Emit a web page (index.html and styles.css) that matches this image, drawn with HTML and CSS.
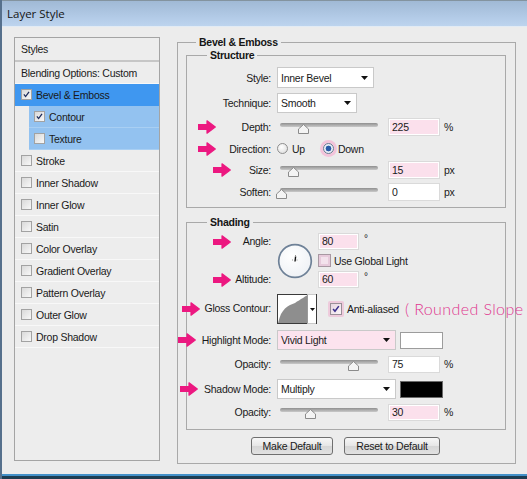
FILE: index.html
```html
<!DOCTYPE html>
<html>
<head>
<meta charset="utf-8">
<title>Layer Style</title>
<link rel="stylesheet" href="styles.css">
</head>
<body>
<div class="window">
  <div class="titlebar"><span class="title">Layer Style</span></div>
  <div class="content">
    <div class="styles-list">
      <div class="list-header">Styles</div>
      <div class="list-row">Blending Options: Custom</div>
      <div class="list-row selected"><span class="cb"><svg viewBox="0 0 11 11"><path d="M2.3 5.4 L4.4 8 L8.6 2.3" class="tick"/></svg></span>Bevel &amp; Emboss</div>
      <div class="list-row sub"><span class="cb"><svg viewBox="0 0 11 11"><path d="M2.3 5.4 L4.4 8 L8.6 2.3" class="tick"/></svg></span>Contour</div>
      <div class="list-row sub"><span class="cb"></span>Texture</div>
      <div class="list-row"><span class="cb"></span>Stroke</div>
      <div class="list-row"><span class="cb"></span>Inner Shadow</div>
      <div class="list-row"><span class="cb"></span>Inner Glow</div>
      <div class="list-row"><span class="cb"></span>Satin</div>
      <div class="list-row"><span class="cb"></span>Color Overlay</div>
      <div class="list-row"><span class="cb"></span>Gradient Overlay</div>
      <div class="list-row"><span class="cb"></span>Pattern Overlay</div>
      <div class="list-row"><span class="cb"></span>Outer Glow</div>
      <div class="list-row"><span class="cb"></span>Drop Shadow</div>
    </div>

    <div class="settings">
      <fieldset class="group outer">
        <legend>Bevel &amp; Emboss</legend>

        <fieldset class="group inner structure">
          <legend>Structure</legend>
          <div class="row r-style">
            <span class="lbl">Style:</span>
            <div class="select w-style"><span>Inner Bevel</span><svg class="caret" viewBox="0 0 7 4"><polygon points="0,0 7,0 3.5,4"/></svg></div>
          </div>
          <div class="row r-tech">
            <span class="lbl">Technique:</span>
            <div class="select w-tech"><span>Smooth</span><svg class="caret" viewBox="0 0 7 4"><polygon points="0,0 7,0 3.5,4"/></svg></div>
          </div>
          <div class="row r-slider r-depth">
            <svg class="arrow a-11" viewBox="0 0 18 14"><polygon points="0.5,4.5 9,4.5 9,0.8 17.3,7 9,13.2 9,9.5 0.5,9.5"/></svg>
            <span class="lbl">Depth:</span>
            <div class="slider"><span class="track"></span><svg class="thumb" style="left:18px" viewBox="0 0 11 10"><polygon points="5.5,0.5 10.5,5 10.5,9.5 0.5,9.5 0.5,5"/></svg></div>
            <span class="num pink">225</span><span class="unit">%</span>
          </div>
          <div class="row r-dir">
            <svg class="arrow a-11" viewBox="0 0 18 14"><polygon points="0.5,4.5 9,4.5 9,0.8 17.3,7 9,13.2 9,9.5 0.5,9.5"/></svg>
            <span class="lbl">Direction:</span>
            <span class="radio"></span><span class="rlabel">Up</span>
            <span class="radio on"></span><span class="rlabel">Down</span>
          </div>
          <div class="row r-slider">
            <svg class="arrow a-26" viewBox="0 0 18 14"><polygon points="0.5,4.5 9,4.5 9,0.8 17.3,7 9,13.2 9,9.5 0.5,9.5"/></svg>
            <span class="lbl">Size:</span>
            <div class="slider"><span class="track"></span><svg class="thumb" style="left:8px" viewBox="0 0 11 10"><polygon points="5.5,0.5 10.5,5 10.5,9.5 0.5,9.5 0.5,5"/></svg></div>
            <span class="num pink">15</span><span class="unit">px</span>
          </div>
          <div class="row r-slider">
            <span class="lbl">Soften:</span>
            <div class="slider"><span class="track"></span><svg class="thumb" style="left:-4px" viewBox="0 0 11 10"><polygon points="5.5,0.5 10.5,5 10.5,9.5 0.5,9.5 0.5,5"/></svg></div>
            <span class="num">0</span><span class="unit">px</span>
          </div>
        </fieldset>

        <fieldset class="group inner shading">
          <legend>Shading</legend>
          <div class="angle-block">
            <div class="angle-labels">
              <span class="lbl stack"><svg class="arrow a-26" viewBox="0 0 18 14"><polygon points="0.5,4.5 9,4.5 9,0.8 17.3,7 9,13.2 9,9.5 0.5,9.5"/></svg>Angle:</span>
              <span class="lbl stack"><svg class="arrow a-26" viewBox="0 0 18 14"><polygon points="0.5,4.5 9,4.5 9,0.8 17.3,7 9,13.2 9,9.5 0.5,9.5"/></svg>Altitude:</span>
            </div>
            <svg class="dial" viewBox="0 0 36 36">
              <defs><radialGradient id="dg" cx="0.4" cy="0.35" r="0.7"><stop offset="0" stop-color="#ffffff"/><stop offset="1" stop-color="#eef1f5"/></radialGradient></defs>
              <circle cx="18" cy="18" r="16.3" fill="url(#dg)" stroke="#6e8197" stroke-width="1.7"/>
              <line x1="18" y1="18.5" x2="18.6" y2="13.5" stroke="#111" stroke-width="1.4"/>
              <line x1="15" y1="17" x2="16.5" y2="17" stroke="#8a8a8a" stroke-width="0.9" stroke-dasharray="1 1"/>
              <line x1="19.5" y1="17" x2="21" y2="17" stroke="#8a8a8a" stroke-width="0.9" stroke-dasharray="1 1"/>
              <line x1="18.5" y1="12" x2="18.5" y2="13" stroke="#8a8a8a" stroke-width="0.9"/>
            </svg>
            <div class="angle-fields">
              <div class="af-row"><span class="num small pink">80</span><span class="deg">°</span></div>
              <div class="af-row"><span class="cb pinkish"></span><span class="cb-text">Use Global Light</span></div>
              <div class="af-row"><span class="num small pink">60</span><span class="deg">°</span></div>
            </div>
          </div>
          <div class="row r-contour">
            <svg class="arrow a-m5" viewBox="0 0 18 14"><polygon points="0.5,4.5 9,4.5 9,0.8 17.3,7 9,13.2 9,9.5 0.5,9.5"/></svg>
            <span class="lbl">Gloss Contour:</span>
            <div class="contour">
              <svg class="curve" viewBox="0 0 29 28"><polygon points="0,28 1.5,23 3,19 5,16 7,13.5 9.5,11.5 12,10 14.5,9 17,8 19,6.5 21,5.5 23,4 25,3 27,1.5 29,0.5 29,28" fill="#8e8e8e"/></svg>
              <span class="contour-drop"><svg class="caret" viewBox="0 0 7 4"><polygon points="0,0 7,0 3.5,4"/></svg></span>
            </div>
            <span class="halo"><span class="cb big"><svg viewBox="0 0 11 11"><path d="M2.3 5.4 L4.4 8 L8.6 2.3" class="tick purple"/></svg></span></span>
            <span class="cb-text">Anti-aliased</span>
            <span class="note">( Rounded Slope</span>
          </div>
          <div class="row r-mode r-hl">
            <svg class="arrow a-m9" viewBox="0 0 18 14"><polygon points="0.5,4.5 9,4.5 9,0.8 17.3,7 9,13.2 9,9.5 0.5,9.5"/></svg>
            <span class="lbl">Highlight Mode:</span>
            <div class="select w-mode pink"><span>Vivid Light</span><svg class="caret" viewBox="0 0 7 4"><polygon points="0,0 7,0 3.5,4"/></svg></div>
            <span class="swatch white"></span>
          </div>
          <div class="row r-op r-op1">
            <span class="lbl">Opacity:</span>
            <div class="slider"><span class="track"></span><svg class="thumb" style="left:68px" viewBox="0 0 11 10"><polygon points="5.5,0.5 10.5,5 10.5,9.5 0.5,9.5 0.5,5"/></svg></div>
            <span class="num">75</span><span class="unit">%</span>
          </div>
          <div class="row r-mode r-sh">
            <svg class="arrow a-m7" viewBox="0 0 18 14"><polygon points="0.5,4.5 9,4.5 9,0.8 17.3,7 9,13.2 9,9.5 0.5,9.5"/></svg>
            <span class="lbl">Shadow Mode:</span>
            <div class="select w-mode"><span>Multiply</span><svg class="caret" viewBox="0 0 7 4"><polygon points="0,0 7,0 3.5,4"/></svg></div>
            <span class="swatch black"></span>
          </div>
          <div class="row r-op r-op2">
            <span class="lbl">Opacity:</span>
            <div class="slider"><span class="track"></span><svg class="thumb" style="left:25px" viewBox="0 0 11 10"><polygon points="5.5,0.5 10.5,5 10.5,9.5 0.5,9.5 0.5,5"/></svg></div>
            <span class="num pink">30</span><span class="unit">%</span>
          </div>
        </fieldset>

        <div class="buttons">
          <button class="btn b-make" type="button">Make Default</button>
          <button class="btn b-reset" type="button">Reset to Default</button>
        </div>
      </fieldset>
    </div>
  </div>
  <div class="frame-bottom"></div>
</div>
</body>
</html>
```
FILE: styles.css
```css
* { box-sizing: border-box; }
html, body { margin: 0; padding: 0; }
body {
  width: 527px;
  height: 479px;
  overflow: hidden;
  background: #ececec;
  font-family: "Liberation Sans", Arial, sans-serif;
  font-size: 10.5px;
  letter-spacing: -0.25px;
  color: #1a1a1a;
}

.window {
  width: 527px;
  height: 479px;
  display: flex;
  flex-direction: column;
  background: #ececec;
  border-left: 2px solid #56708c;
}

/* title bar */
.titlebar {
  flex: none;
  height: 27px;
  display: flex;
  align-items: center;
  padding-left: 5px;
  background: linear-gradient(#a0b9d5, #b4cce8 70%, #bdd4ee);
  border-top: 1px solid #83939f;
  border-bottom: 1px solid #e2ebf4;
}
.title {
  font-family: "Open Sans", "Liberation Sans", sans-serif;
  font-size: 11.5px;
  letter-spacing: 0;
  color: #151515;
}

.content {
  flex: 1;
  display: flex;
  align-items: flex-start;
  padding: 10px 0 0 12px;
}

/* styles list */
.styles-list {
  flex: none;
  width: 146px;
  height: 424px;
  border: 1px solid #a4a4a4;
  background: #ededed;
}
.list-header {
  height: 24px;
  padding-left: 6px;
  display: flex;
  align-items: center;
  border-bottom: 2px solid #c6c6c6;
}
.list-row {
  height: 22px;
  display: flex;
  align-items: center;
  gap: 4px;
  padding-left: 6px;
  border-bottom: 1px solid #f8f8f8;
}
.list-row.selected { background: #3f97f0; border-bottom-color: #3f97f0; }
.list-row.sub {
  margin-left: 14px;
  padding-left: 5px;
  background: #93c2f0;
  border-bottom-color: #a9cff3;
}

.cb {
  flex: none;
  width: 11px;
  height: 11px;
  border: 1px solid #a2a2a2;
  background: linear-gradient(135deg, #d9d9d9, #f8f8f8);
  display: flex;
}
.cb svg { width: 100%; height: 100%; }
.tick { fill: none; stroke: #1d2c5c; stroke-width: 1.6; }
.tick.purple { stroke: #3b2f8c; stroke-width: 1.7; }

/* settings */
.settings {
  flex: none;
  width: 339px;
  margin-left: 17px;
  margin-top: -1px;
}
.group {
  margin: 0;
  padding: 0;
  min-width: 0;
  border: 1px solid #a9a9a9;
}
.group > legend {
  padding: 0 3px;
  line-height: 13px;
  font-weight: bold;
  color: #151515;
}
.outer { padding: 0 9px 8px 8px; }
.outer > legend { margin-left: 10px; }
.inner { padding: 0 0 4px 0; }
.inner > legend { margin-left: 20px; }
.shading { margin-top: 8px; padding-bottom: 5px; }

.row {
  position: relative;
  display: flex;
  align-items: center;
  white-space: nowrap;
}
.lbl {
  position: relative;
  flex: none;
  width: 84px;
  margin-right: 6px;
  text-align: right;
  white-space: nowrap;
}

.r-style { margin-top: 5px; height: 21px; }
.r-tech { margin-top: 5px; height: 20px; }
.r-depth { margin-top: 3px; }
.r-slider { height: 22px; }
.r-dir { height: 21px; }

/* pink annotation arrows */
.arrow {
  position: absolute;
  top: 50%;
  margin-top: -7px;
  width: 18px;
  height: 14px;
  fill: #ec1880;
  stroke: #ec1880;
  stroke-width: 1.2;
  stroke-linejoin: round;
}
.a-11 { left: 11px; }
.a-26 { left: 26px; }
.a-m5 { left: -5px; }
.a-m9 { left: -9px; }
.a-m7 { left: -7px; }
.lbl .arrow { left: 26px; }

/* dropdowns */
.select {
  flex: none;
  height: 100%;
  display: flex;
  align-items: center;
  justify-content: space-between;
  padding: 0 5px 0 3px;
  background: #fff;
  border: 1px solid #c9c9c9;
}
.select.pink { background: #fce3ee; }
.w-style { width: 97px; }
.w-tech { width: 80px; }
.w-mode { width: 119px; }
.caret { width: 7px; height: 4px; fill: #111; flex: none; }

/* sliders */
.slider {
  position: relative;
  flex: none;
  width: 98px;
  height: 14px;
  margin-left: 3px;
  margin-right: 10px;
}
.track {
  position: absolute;
  left: 0;
  right: 0;
  top: 3px;
  height: 4px;
  border-radius: 2px;
  background: linear-gradient(#8f8f8f, #c9c9c9);
}
.thumb {
  position: absolute;
  top: 4px;
  width: 11px;
  height: 10px;
  fill: #f4f4f4;
  stroke: #8b8b8b;
  stroke-width: 1;
}

/* numeric fields */
.num {
  flex: none;
  width: 52px;
  height: 18px;
  line-height: 16px;
  padding-left: 3px;
  background: #fff;
  border: 1px solid #dadada;
  box-shadow: inset 0 0 0 1px #fff;
}
.num.pink { background: #fbe0ec; }
.num.small { width: 41px; height: 17px; line-height: 15px; }
.unit { margin-left: 4px; }

/* radios */
.radio {
  flex: none;
  width: 11px;
  height: 11px;
  border-radius: 50%;
  border: 1px solid #8e8e8e;
  background: radial-gradient(circle at 40% 35%, #ffffff, #d8d8d8);
}
.radio.on {
  margin-left: 18px;
  border-color: #6b7a90;
  background: radial-gradient(circle, #2a5aa8 0 2.6px, #e9eef7 3.2px);
  box-shadow: 0 0 0 3px #f3c3da;
}
.rlabel { margin-left: 4px; }

/* angle block */
.angle-block {
  display: flex;
  margin-top: 4px;
  height: 55px;
}
.angle-labels {
  flex: none;
  display: flex;
  flex-direction: column;
  justify-content: space-between;
  margin-right: 6px;
}
.lbl.stack {
  height: 17px;
  line-height: 17px;
  margin-right: 0;
}
.dial {
  flex: none;
  width: 36px;
  height: 36px;
  align-self: center;
  margin-right: 5px;
}
.angle-fields {
  display: flex;
  flex-direction: column;
  gap: 2px;
}
.af-row {
  height: 17px;
  display: flex;
  align-items: center;
  white-space: nowrap;
}
.deg { align-self: flex-start; margin-left: 5px; font-size: 10px; line-height: 12px; }
.cb.pinkish {
  width: 13px;
  height: 13px;
  border-color: #a898a2;
  background: #f3e2ec;
  box-shadow: inset 0 0 0 2px #e7cadb;
}
.cb-text { flex: none; margin-left: 3px; white-space: nowrap; }

/* contour row */
.r-contour { margin-top: 6px; height: 30px; }
.r-contour .lbl { margin-top: -3px; }
.contour {
  flex: none;
  display: flex;
  height: 30px;
  width: 40px;
  border: 1px solid #3a3a3a;
  background: #fff;
}
.curve { width: 29px; height: 28px; }
.contour-drop {
  flex: 1;
  display: flex;
  align-items: center;
  justify-content: center;
  border-left: 1px solid #9a9a9a;
  margin-top: -1px;
  margin-bottom: -1px;
  border-top: 1px solid #c9c9c9;
  border-bottom: 1px solid #c9c9c9;
}
.contour-drop .caret { width: 5px; height: 3px; }
.halo {
  flex: none;
  margin-left: 11px;
  padding: 2px;
  background: #eecbdc;
  border-radius: 2px;
  display: flex;
}
.cb.big { width: 12px; height: 12px; border-color: #9a8f98; background: linear-gradient(135deg, #e6d6e0, #fbf5f8); }
.note {
  flex: none;
  margin-left: 6px;
  font-family: "Lato", "Liberation Sans", sans-serif;
  font-weight: 300;
  font-size: 16px;
  letter-spacing: 0.4px;
  color: #e0378f;
  white-space: nowrap;
  margin-top: -1px;
}

/* modes */
.r-mode { height: 20px; }
.r-hl { margin-top: 6px; }
.r-sh { margin-top: 3px; }
.r-op { height: 24px; }
.r-op1 { margin-top: 2px; }
.r-op2 { margin-top: 1px; }
.r-op .num { height: 17px; line-height: 15px; }
.swatch {
  flex: none;
  width: 43px;
  height: 17px;
  margin-left: 4px;
  border: 1px solid #9c9c9c;
}
.swatch.white { background: #fff; }
.swatch.black { background: #000; border-color: #6a6a6a; }

/* buttons */
.buttons {
  display: flex;
  gap: 11px;
  padding-left: 65px;
  margin-top: 7px;
}
.btn {
  height: 18px;
  padding: 0;
  font: inherit;
  letter-spacing: -0.25px;
  color: #1a1a1a;
  border: 1px solid #6f6f6f;
  border-radius: 3px;
  background: linear-gradient(#f7f7f7, #e6e6e6 50%, #d6d6d6 51%, #e2e2e2);
}
.b-make { width: 82px; }
.b-reset { width: 96px; }

.frame-bottom {
  flex: none;
  height: 5px;
  background: linear-gradient(#4390c8 0 2px, #1d3d52 2px);
}
```
